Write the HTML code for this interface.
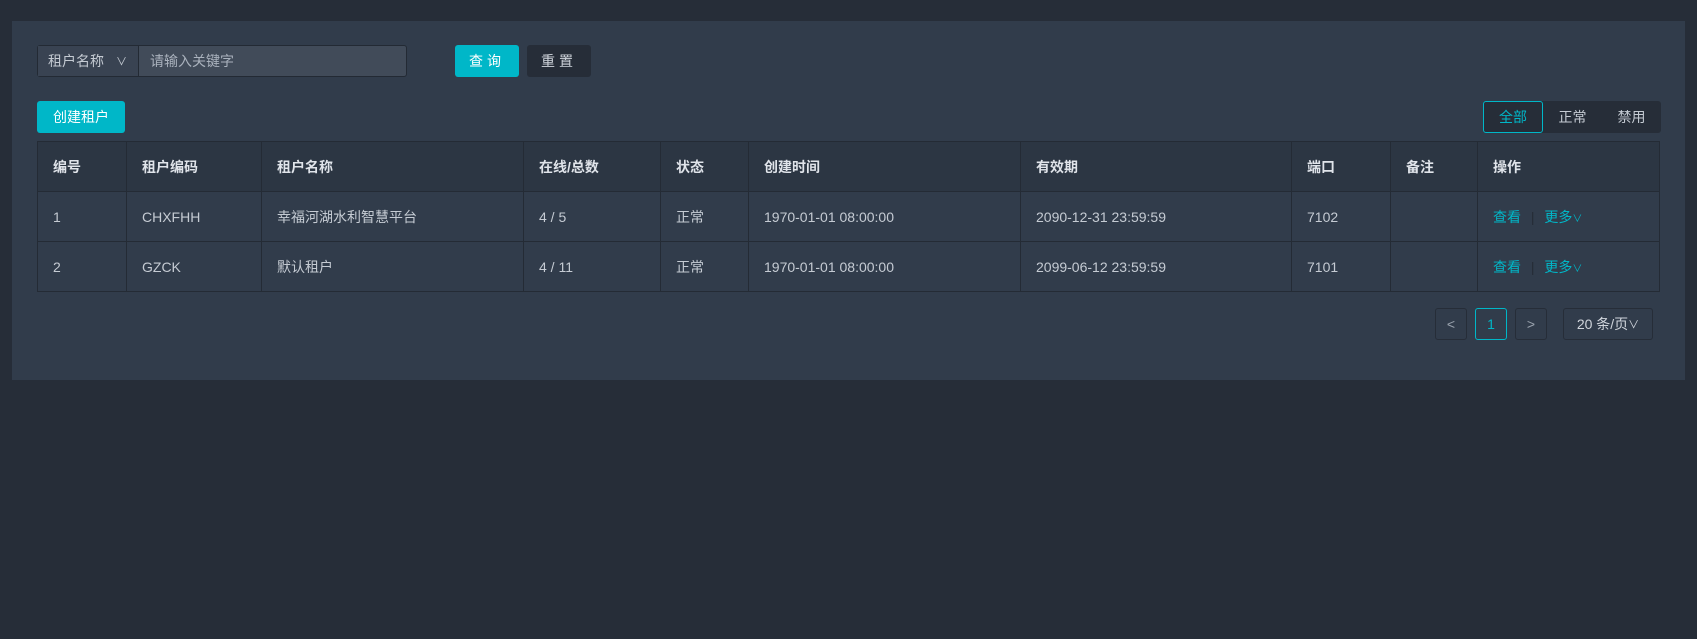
<!DOCTYPE html>
<html><head><meta charset="utf-8"><style>
*{box-sizing:border-box;margin:0;padding:0}
body{width:1697px;height:639px;background:#262d38;font-family:"Liberation Sans","Noto Sans CJK SC",sans-serif;font-size:14px;color:#c5cbd3;position:relative;overflow:hidden}
.a{position:absolute}
.panel{left:12px;top:21px;width:1673px;height:359px;background:#313c4b}
.flex{display:flex;align-items:center}
table{position:absolute;left:37px;top:141px;width:1623px;border-collapse:collapse;table-layout:fixed}
td,th{border:1px solid #242b35;height:50px;padding-left:15px;text-align:left;font-weight:normal;color:#c5cbd3}
th{background:#2c3643;font-weight:bold;color:#e0e4ea}
.teal{color:#00b7c8}
</style></head><body>
<div class="a panel"></div>
<div class="a flex" style="left:37px;top:45px;width:370px;height:32px;border:1px solid #232a34;border-radius:3px;background:#414b59">
 <div class="flex" style="width:101px;height:100%;background:#394352;border-right:1px solid #232a34;padding-left:10px;color:#c5cbd3">租户名称<span style="margin-left:12px;font-size:11px">∨</span></div>
 <div style="padding-left:11px;color:#aab2bd">请输入关键字</div>
</div>
<div class="a flex" style="left:455px;top:45px;width:64px;height:32px;background:#00b7c8;border-radius:3px;justify-content:center;color:#fff;letter-spacing:4px">查询</div>
<div class="a flex" style="left:527px;top:45px;width:64px;height:32px;background:#262d38;border-radius:3px;justify-content:center;color:#d0d5dc;letter-spacing:4px">重置</div>
<div class="a flex" style="left:37px;top:101px;width:88px;height:32px;background:#00b7c8;border-radius:3px;justify-content:center;color:#fff">创建租户</div>
<div class="a flex" style="left:1483px;top:101px;width:178px;height:32px;background:#262d38;border-radius:3px">
 <div class="flex teal" style="width:60px;height:32px;border:1px solid #00b7c8;border-radius:3px;justify-content:center">全部</div>
 <div style="width:59px;text-align:center">正常</div>
 <div style="width:59px;text-align:center">禁用</div>
</div>
<table>
<colgroup><col style="width:89px"><col style="width:135px"><col style="width:262px"><col style="width:137px"><col style="width:88px"><col style="width:272px"><col style="width:271px"><col style="width:99px"><col style="width:87px"><col></colgroup>
<tr><th>编号</th><th>租户编码</th><th>租户名称</th><th>在线/总数</th><th>状态</th><th>创建时间</th><th>有效期</th><th>端口</th><th>备注</th><th>操作</th></tr>
<tr style="background:#313c4b"><td>1</td><td>CHXFHH</td><td>幸福河湖水利智慧平台</td><td>4 / 5</td><td>正常</td><td>1970-01-01 08:00:00</td><td>2090-12-31 23:59:59</td><td>7102</td><td></td><td class="teal">查看 <span style="color:#242b35;margin:0 6px">|</span> 更多<span style="font-size:10px">∨</span></td></tr>
<tr style="background:#313c4b"><td>2</td><td>GZCK</td><td>默认租户</td><td>4 / 11</td><td>正常</td><td>1970-01-01 08:00:00</td><td>2099-06-12 23:59:59</td><td>7101</td><td></td><td class="teal">查看 <span style="color:#242b35;margin:0 6px">|</span> 更多<span style="font-size:10px">∨</span></td></tr>
</table>
<div class="a flex" style="left:1435px;top:308px;width:32px;height:32px;border:1px solid #262d38;border-radius:3px;justify-content:center;color:#9aa3ae">&lt;</div>
<div class="a flex teal" style="left:1475px;top:308px;width:32px;height:32px;border:1px solid #00b7c8;border-radius:3px;justify-content:center">1</div>
<div class="a flex" style="left:1515px;top:308px;width:32px;height:32px;border:1px solid #262d38;border-radius:3px;justify-content:center;color:#9aa3ae">&gt;</div>
<div class="a flex" style="left:1563px;top:308px;width:90px;height:32px;border:1px solid #262d38;border-radius:3px;justify-content:center;color:#d0d5dc">20 条/页<span style="font-size:11px">∨</span></div>
</body></html>
